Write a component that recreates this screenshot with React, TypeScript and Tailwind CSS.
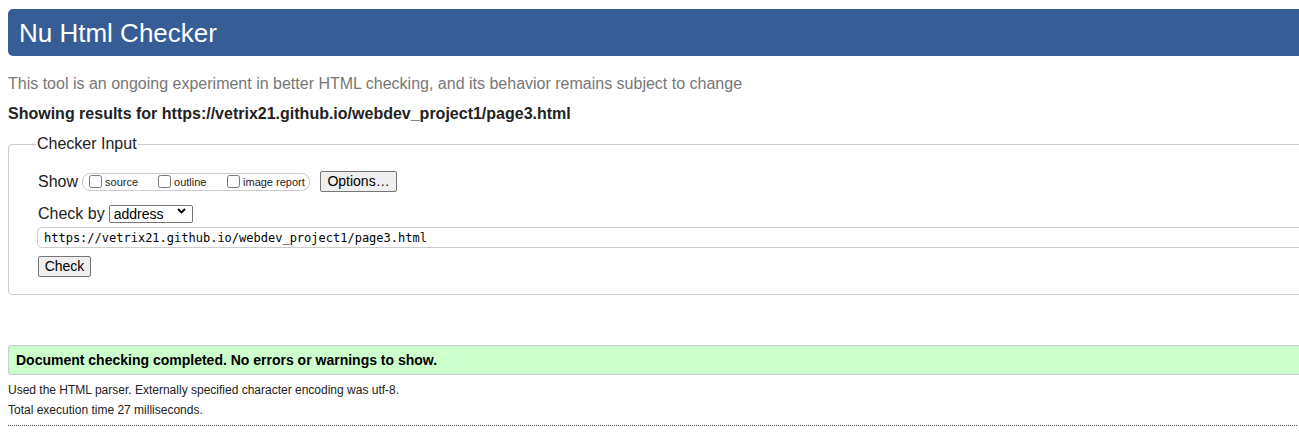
import React from 'react';

const url = 'https://vetrix21.github.io/webdev_project1/page3.html';

const Chevron = () => (
  <svg width="9" height="6" viewBox="0 0 9 6" className="absolute right-[7px] top-[6px]">
    <path d="M1 1 L4.5 4.5 L8 1" fill="none" stroke="#000" strokeWidth="1.8" />
  </svg>
);

const Check = ({ label }: { label: string }) => (
  <label className="flex items-center">
    <input type="checkbox" className="m-0 ml-[1px] h-[13px] w-[13px]" />
    <span className="ml-[3px] mt-[2px] text-[11px] leading-[13px] text-[#222]">{label}</span>
  </label>
);

export default function App() {
  return (
    <div className="h-[447px] w-[1299px] overflow-hidden bg-white font-['Liberation_Sans',Arial,sans-serif] text-[#222]">
      <div className="w-[1340px] pl-2">
        <header className="mt-[9px] flex h-[47px] items-center rounded-l-[5px] bg-[#365d95] pl-[11px]">
          <h1 className="text-[26px] leading-none text-white">Nu Html Checker</h1>
        </header>

        <p className="mt-[19px] text-[16px] leading-[18px] text-[#777]">
          This tool is an ongoing experiment in better HTML checking, and its behavior remains subject to change
        </p>
        <p className="mt-[12px] text-[16px] font-bold leading-[18px] text-[#222]">Showing results for {url}</p>

        <fieldset className="mt-[12px] h-[160px] rounded-l-[4px] border border-[#ccc] pl-[29px]">
          <legend className="-ml-[2px] px-[1px] text-[16px] leading-[18px] text-[#222]">Checker Input</legend>

          <div className="mt-[18px] flex items-center">
            <span className="text-[16px] leading-[18px]">Show</span>
            <div className="ml-[4px] flex h-[18px] w-[228px] items-center rounded-[8px] border border-[#ccc] pl-[5px]">
              <div className="w-[69px]"><Check label="source" /></div>
              <div className="w-[69px]"><Check label="outline" /></div>
              <Check label="image report" />
            </div>
            <button className="ml-[10px] h-[21px] w-[77px] rounded-[2px] border border-[#767676] bg-[#efefef] text-[14px] leading-[19px] text-black">
              Options…
            </button>
          </div>

          <div className="mt-[10px] flex items-center">
            <span className="text-[16px] leading-[18px]">Check by</span>
            <div className="relative ml-[4px]">
              <select className="h-[18px] w-[84px] appearance-none rounded-[2px] border border-[#767676] bg-white pl-[4px] text-[14px] leading-[16px] text-black">
                <option>address</option>
              </select>
              <Chevron />
            </div>
          </div>

          <div className="mt-[1px] -ml-[1px] flex h-[21px] items-center rounded-l-[5px] border border-[#ccc] pl-[6px]">
            <span className="font-['DejaVu_Sans_Mono',monospace] text-[12px] leading-none text-black">{url}</span>
          </div>

          <button className="mt-[8px] h-[21px] w-[53px] rounded-[2px] border border-[#767676] bg-[#efefef] text-[14px] leading-[19px] text-black">
            Check
          </button>
        </fieldset>

        <div className="mt-[50px] flex h-[30px] items-center rounded-l-[4px] border border-r-0 border-[#ccc] bg-[#ccffcc] pl-[7px]">
          <span className="text-[14px] font-bold leading-none text-black">
            Document checking completed. No errors or warnings to show.
          </span>
        </div>

        <p className="mt-[8px] text-[12px] leading-[14px] text-[#222]">
          Used the HTML parser. Externally specified character encoding was utf-8.
        </p>
        <p className="mt-[6px] text-[12px] leading-[14px] text-[#222]">Total execution time 27 milliseconds.</p>
        <div className="mt-[8px] w-[1289px] border-t border-dotted border-[#555]" />
      </div>
    </div>
  );
}
